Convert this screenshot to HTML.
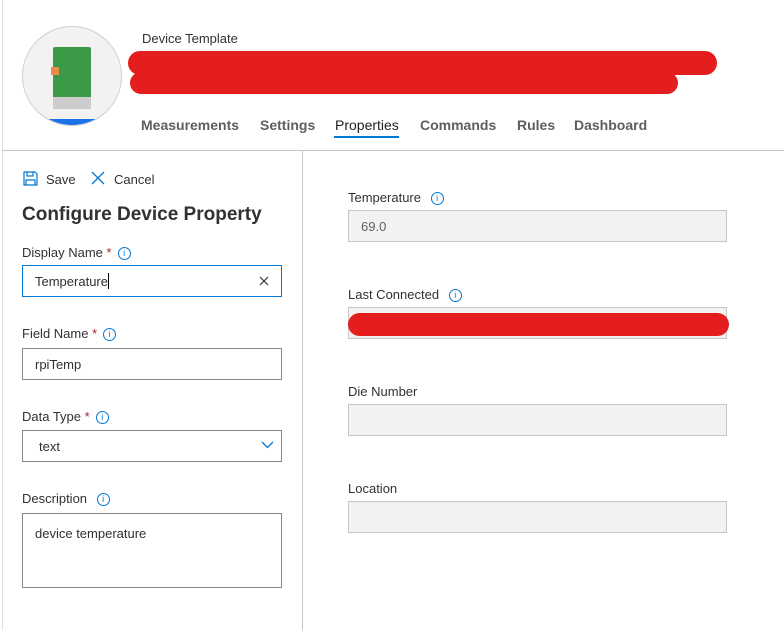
<!DOCTYPE html>
<html><head><style>
*{box-sizing:border-box;margin:0;padding:0}
body{width:784px;height:630px;background:#fff;font-family:"Liberation Sans",sans-serif;color:#323130;position:relative;overflow:hidden;font-size:13px}
.a{position:absolute}
.lbl{font-size:13px;color:#323130}
.in{position:absolute;border:1px solid #8a8886;background:#fff;font-size:13px;padding-left:12px;display:flex;align-items:center}
.ro{position:absolute;border:1px solid #c8c6c4;background:#f3f2f1;font-size:13px;color:#605e5c;padding-left:12px;display:flex;align-items:center}
.i{display:inline-block;width:13px;height:13px;border:1px solid #0078d4;border-radius:50%;color:#0078d4;font-size:9px;line-height:11px;text-align:center;margin-left:6px;vertical-align:1px}
.st{color:#a4262c}
.tab{position:absolute;top:117px;font-size:14px;font-weight:bold;color:#605e5c}
</style></head><body>
<div class="a" style="left:2px;top:0;width:1px;height:630px;background:#e1dfdd"></div>
<div class="a" style="left:22px;top:26px;width:100px;height:100px;border-radius:50%;background:#f3f2f1;border:1px solid #d2d0ce;overflow:hidden">
 <div class="a" style="left:0;top:92px;width:100px;height:10px;background:#1a73e8"></div>
 <div class="a" style="left:30px;top:20px;width:38px;height:62px;background:#3c9a46;border-radius:2px"></div>
 <div class="a" style="left:28px;top:40px;width:8px;height:8px;background:#e88c4a"></div>
 <div class="a" style="left:30px;top:70px;width:38px;height:12px;background:#ccc"></div>
</div>
<div class="a" style="left:142px;top:31px;font-size:13px">Device Template</div>
<div class="a" style="left:128px;top:51px;width:589px;height:24px;background:#e41e1e;border-radius:12px"></div>
<div class="a" style="left:130px;top:72px;width:548px;height:22px;background:#e41e1e;border-radius:11px"></div>
<div class="tab" style="left:141px">Measurements</div>
<div class="tab" style="left:260px">Settings</div>
<div class="tab" style="left:335px;color:#201f1e;font-weight:normal">Properties</div>
<div class="a" style="left:334px;top:136px;width:65px;height:2px;background:#0078d4"></div>
<div class="tab" style="left:420px">Commands</div>
<div class="tab" style="left:517px">Rules</div>
<div class="tab" style="left:574px">Dashboard</div>
<div class="a" style="left:2px;top:150px;width:782px;height:1px;background:#c8c6c4"></div>
<div class="a" style="left:302px;top:151px;width:1px;height:479px;background:#c8c6c4"></div>

<svg class="a" style="left:23px;top:171px" width="15" height="15" viewBox="0 0 15 15" fill="none" stroke="#0078d4" stroke-width="1.2"><path d="M1 1h11l2 2v11H1z M4 1v4h6V1 M3 14V9h9v5"/></svg>
<div class="a" style="left:46px;top:172px">Save</div>
<svg class="a" style="left:91px;top:171px" width="14" height="14" stroke="#0078d4" stroke-width="1.3"><path d="M1 1L13 13M13 1L1 13"/></svg>
<div class="a" style="left:114px;top:172px">Cancel</div>
<div class="a" style="left:22px;top:204px;font-size:19px;font-weight:bold;color:#323130">Configure Device Property</div>

<div class="a lbl" style="left:22px;top:245px">Display Name <span class="st">*</span><span class="i">i</span></div>
<div class="in" style="left:22px;top:265px;width:260px;height:32px;border:1px solid #0078d4">Temperature<span style="display:inline-block;width:1px;height:16px;background:#000"></span></div>
<svg class="a" style="left:259px;top:276px" width="10" height="10" stroke="#323130" stroke-width="1.2"><path d="M1 1L9 9M9 1L1 9"/></svg>

<div class="a lbl" style="left:22px;top:326px">Field Name <span class="st">*</span><span class="i">i</span></div>
<div class="in" style="left:22px;top:348px;width:260px;height:32px">rpiTemp</div>

<div class="a lbl" style="left:22px;top:409px">Data Type <span class="st">*</span><span class="i">i</span></div>
<div class="in" style="left:22px;top:430px;width:260px;height:32px;padding-left:16px">text</div>
<svg class="a" style="left:261px;top:441px" width="13" height="8" fill="none" stroke="#0078d4" stroke-width="1.3"><path d="M1 1L6.5 6.5L12 1"/></svg>

<div class="a lbl" style="left:22px;top:491px">Description <span class="i">i</span></div>
<div class="in" style="left:22px;top:513px;width:260px;height:75px;align-items:flex-start;padding-top:12px">device temperature</div>

<div class="a lbl" style="left:348px;top:190px">Temperature <span class="i">i</span></div>
<div class="ro" style="left:348px;top:210px;width:379px;height:32px">69.0</div>
<div class="a lbl" style="left:348px;top:287px">Last Connected <span class="i">i</span></div>
<div class="ro" style="left:348px;top:307px;width:379px;height:32px"></div>
<div class="a" style="left:348px;top:313px;width:381px;height:23px;background:#e41e1e;border-radius:12px"></div>
<div class="a lbl" style="left:348px;top:384px">Die Number</div>
<div class="ro" style="left:348px;top:404px;width:379px;height:32px"></div>
<div class="a lbl" style="left:348px;top:481px">Location</div>
<div class="ro" style="left:348px;top:501px;width:379px;height:32px"></div>
</body></html>
